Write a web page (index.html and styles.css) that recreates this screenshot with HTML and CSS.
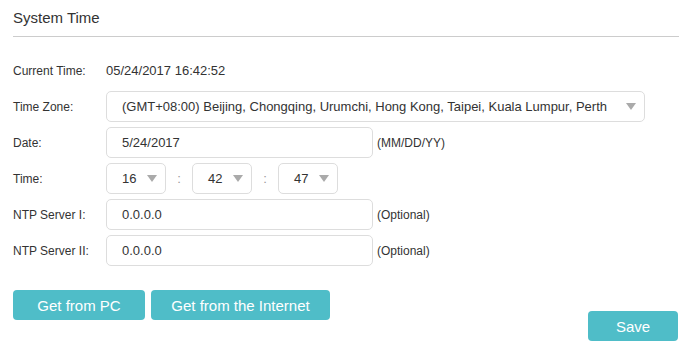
FILE: index.html
```html
<!DOCTYPE html>
<html lang="en">
<head>
    <meta charset="UTF-8">
    <title>System Time</title>
    <link rel="stylesheet" href="styles.css">
</head>
<body>
    <div class="panel">
        <h2 class="panel-title">System Time</h2>
        <div class="form">
            <div class="row">
                <span class="label">Current Time:</span>
                <span class="value">05/24/2017 16:42:52</span>
            </div>
            <div class="row">
                <span class="label">Time Zone:</span>
                <div class="select select-wide">
                    <span>(GMT+08:00) Beijing, Chongqing, Urumchi, Hong Kong, Taipei, Kuala Lumpur, Perth</span>
                    <i class="arrow"></i>
                </div>
            </div>
            <div class="row">
                <span class="label">Date:</span>
                <div class="input">5/24/2017</div>
                <span class="hint">(MM/DD/YY)</span>
            </div>
            <div class="row">
                <span class="label">Time:</span>
                <div class="select select-small"><span>16</span><i class="arrow"></i></div>
                <span class="colon">:</span>
                <div class="select select-small"><span>42</span><i class="arrow"></i></div>
                <span class="colon">:</span>
                <div class="select select-small"><span>47</span><i class="arrow"></i></div>
            </div>
            <div class="row">
                <span class="label">NTP Server I:</span>
                <div class="input">0.0.0.0</div>
                <span class="hint">(Optional)</span>
            </div>
            <div class="row">
                <span class="label">NTP Server II:</span>
                <div class="input">0.0.0.0</div>
                <span class="hint">(Optional)</span>
            </div>
        </div>
        <div class="actions">
            <div class="btn-group">
                <button class="btn btn-pc">Get from PC</button>
                <button class="btn btn-net">Get from the Internet</button>
            </div>
            <button class="btn btn-save">Save</button>
        </div>
    </div>
</body>
</html>
```

FILE: styles.css
```css
body {
    margin: 0;
    font-family: "Liberation Sans", Arial, sans-serif;
    color: #333;
    background-color: #fff;
}
.panel {
    padding-left: 13px;
}
.panel-title {
    margin: 0;
    padding: 8px 0;
    font-size: 15px;
    font-weight: normal;
    line-height: 20px;
    border-bottom: 1px solid #ccc;
}
.form {
    margin-top: 18px;
}
.row {
    display: flex;
    align-items: center;
    height: 31px;
    margin-bottom: 5px;
}
.label {
    width: 93px;
    font-size: 12px;
}
.value {
    font-size: 13px;
}
.select,
.input {
    box-sizing: border-box;
    height: 31px;
    border: 1px solid #ddd;
    border-radius: 5px;
    padding-left: 15px;
    font-size: 13px;
    display: flex;
    align-items: center;
}
.select {
    justify-content: space-between;
    padding-right: 8px;
}
.select-wide {
    width: 539px;
}
.select-small {
    width: 60px;
}
.input {
    width: 267px;
}
.arrow {
    width: 0;
    height: 0;
    border-left: 5px solid transparent;
    border-right: 5px solid transparent;
    border-top: 7px solid #aaa;
}
.colon {
    width: 26px;
    text-align: center;
    font-size: 13px;
    color: #999;
}
.hint {
    margin-left: 4px;
    font-size: 12px;
}
.actions {
    display: flex;
    justify-content: space-between;
    align-items: flex-start;
    margin-top: 24px;
}
.btn-group {
    display: flex;
    gap: 6px;
}
.btn {
    height: 30px;
    border: none;
    border-radius: 4px;
    background-color: #4fbdc8;
    color: #fff;
    font-family: "Liberation Sans", Arial, sans-serif;
    font-size: 15px;
    cursor: pointer;
}
.btn-pc {
    width: 132px;
}
.btn-net {
    width: 179px;
}
.btn-save {
    width: 90px;
    margin-top: 21px;
    margin-right: 1px;
}
```
